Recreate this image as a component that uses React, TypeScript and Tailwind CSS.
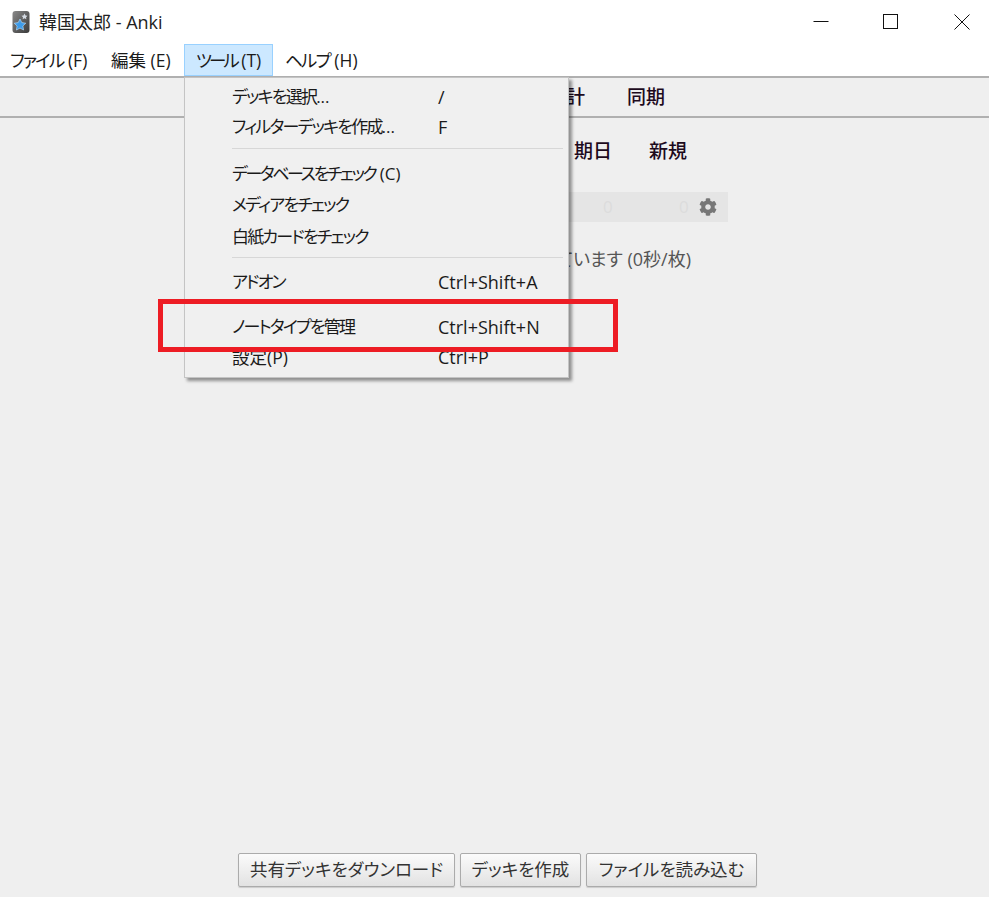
import React from 'react';
import { FaCog } from 'react-icons/fa';

const fontStack = 'font-["Open_Sans","Noto_Sans_CJK_JP",sans-serif] [font-feature-settings:"palt"]';

const AppIcon = () => (
  <svg width="18" height="24" viewBox="0 0 18 24">
    <defs>
      <linearGradient id="icon-bg" x1="0" y1="0" x2="1" y2="1">
        <stop offset="0" stopColor="#8a8a8a" />
        <stop offset="0.55" stopColor="#5c5c5c" />
        <stop offset="1" stopColor="#3a3a3a" />
      </linearGradient>
    </defs>
    <rect x="0.5" y="1" width="17" height="22" rx="3" fill="url(#icon-bg)" />
    <path d="M12.5 3.5l1 2 2 .3-1.5 1.4.4 2-1.9-1-1.9 1 .4-2-1.5-1.4 2-.3z" fill="#d5dbe3" />
    <path d="M8 9l1.8 3.6 4 .6-2.9 2.8.7 4L8 18.1 4.400 20l.7-4-2.9-2.800 4-.6z" fill="#3d9be9" stroke="#bfe0fa" strokeWidth="0.6" />
  </svg>
);

const WindowControls = () => (
  <div className="flex items-center">
    <svg width="16" height="16" viewBox="0 0 16 16" className="mr-[54px]">
      <path d="M0.500 7.500H15.500" stroke="#111" strokeWidth="1" />
    </svg>
    <svg width="16" height="16" viewBox="0 0 16 16" className="mr-[55px]">
      <rect x="0.500" y="0.500" width="14" height="14" fill="none" stroke="#111" strokeWidth="1" />
    </svg>
    <svg width="16" height="16" viewBox="0 0 16 16" className="mr-[19px]">
      <path d="M0.500 0.500L15.500 15.500M15.500 0.500L0.500 15.500" stroke="#111" strokeWidth="1" />
    </svg>
  </div>
);

const MenuRow = ({ label, suffix, shortcut, className, labelClass = 'tracking-[-1.800px]' }: { label: string; suffix?: string; shortcut?: string; className: string; labelClass?: string }) => (
  <div className={`flex items-center pl-[47px] text-[17px] text-[#1a1a1a] ${className}`}>
    <span className="w-[206px] whitespace-pre">
      <span className={labelClass}>{label}</span>
      {suffix}
    </span>
    <span className="text-[18px] whitespace-nowrap">{shortcut}</span>
  </div>
);

const Separator = ({ className }: { className: string }) => (
  <div className={`pl-[47px] pr-[5px] ${className}`}>
    <div className="h-px w-full bg-[#d7d7d7]" />
  </div>
);

const ToolsMenu = () => (
  <div className="absolute left-[184px] top-[77px] h-[301px] w-[385px] border border-[#c4c4c4] bg-[#f0f0f0] pt-[4px] shadow-[3px_3px_3px_rgba(0,0,0,0.4)]">
    <MenuRow label="デッキを選択" suffix="..." shortcut="/" className="h-[30px]" />
    <MenuRow label="フィルターデッキを作成" suffix="..." shortcut="F" className="h-[30px]" />
    <Separator className="h-[16px] pt-[6px]" />
    <MenuRow label="データベースをチェック" suffix=" (C)" className="h-[31px]" labelClass="tracking-[-2.400px]" />
    <MenuRow label="メディアをチェック" className="h-[32px]" />
    <MenuRow label="白紙カードをチェック" className="h-[31px]" />
    <Separator className="h-[15px] pt-[5px]" />
    <MenuRow label="アドオン" shortcut="Ctrl+Shift+A" className="h-[30px]" />
    <Separator className="h-[15px] pt-[4px]" />
    <MenuRow label="ノートタイプを管理" shortcut="Ctrl+Shift+N" className="h-[30px]" />
    <MenuRow label="設定(P)" shortcut="Ctrl+P" className="h-[31px]" labelClass="text-[17.500px]" />
  </div>
);

const FooterButton = ({ label, className }: { label: string; className: string }) => (
  <button className={`h-[34px] rounded-[2px] border border-[#ababab] bg-gradient-to-b from-[#fbfbfb] to-[#e2e2e2] text-center text-[17.500px] leading-none whitespace-nowrap text-[#333] shadow-[0_1px_1px_rgba(0,0,0,0.15)] ${className}`}>
    {label}
  </button>
);

export default function App() {
  return (
    <div className={`relative flex h-[897px] w-[989px] flex-col overflow-hidden bg-[#efefef] ${fontStack}`}>
      {/* Title and menu */}
      <div className="bg-white">
        <div className="flex h-[44px] items-center justify-between pl-[12px]">
          <div className="flex items-center gap-[9px] text-[18px] text-[#222]">
            <AppIcon />
            <span>韓国太郎 - Anki</span>
          </div>
          <WindowControls />
        </div>
        <div className="flex h-[32px] items-stretch pt-px text-[17.500px] text-[#1a1a1a]">
          <div className="flex w-[99px] items-center pl-[10px] whitespace-pre"><span className="tracking-[-1.800px]">ファイル</span> (F)</div>
          <div className="flex w-[85px] items-center pl-[12px] whitespace-pre">編集 (E)</div>
          <div className="-mt-px flex w-[89px] items-center border border-[#99d1ff] bg-[#cce8ff] pl-[11px] whitespace-pre"><span className="tracking-[-3px]">ツール</span> (T)</div>
          <div className="flex items-center pl-[12px] whitespace-pre"><span className="tracking-[-1.800px]">ヘルプ</span> (H)</div>
        </div>
      </div>

      {/* Toolbar: the first tabs sit behind the open menu */}
      <div className="flex h-[42px] items-center justify-end gap-[42px] border-y-2 border-y-[#b0b0b0] pr-[324px] text-[19px] font-medium text-[#1d0a1d]">
        <span>統計</span>
        <span>同期</span>
      </div>

      {/* Deck list */}
      <div className="flex flex-1 flex-col items-center pt-[19px]">
        <div className="w-[467px]">
          <div className="flex h-[28px] items-center justify-end pr-[41px] text-[19px] font-medium text-[#1d0a1d]">
            <span className="w-[75px]">期日</span>
            <span>新規</span>
          </div>
          <div className="mt-[27px] flex h-[30px] items-center justify-end bg-[#e5e5e5] text-[17px] text-[#dcdcdc]">
            <span className="w-[76px]">0</span>
            <span className="w-[20px]">0</span>
            <FaCog className="mr-[11px] text-[18px] text-[#777]" />
          </div>
        </div>
        <p className="mt-[24px] self-end pr-[298px] text-[18px] whitespace-nowrap text-[#555]">ています (0秒/枚)</p>
      </div>

      {/* Footer buttons */}
      <div className="flex justify-center gap-[5px] pb-[10px] pl-[6px]">
        <FooterButton label="共有デッキをダウンロード" className="w-[217px]" />
        <FooterButton label="デッキを作成" className="w-[121px]" />
        <FooterButton label="ファイルを読み込む" className="w-[171px]" />
      </div>

      <ToolsMenu />

      {/* Annotation */}
      <div className="absolute left-[158px] top-[299px] h-[53px] w-[460px] border-[5px] border-[#ed1c24]" />
    </div>
  );
}
